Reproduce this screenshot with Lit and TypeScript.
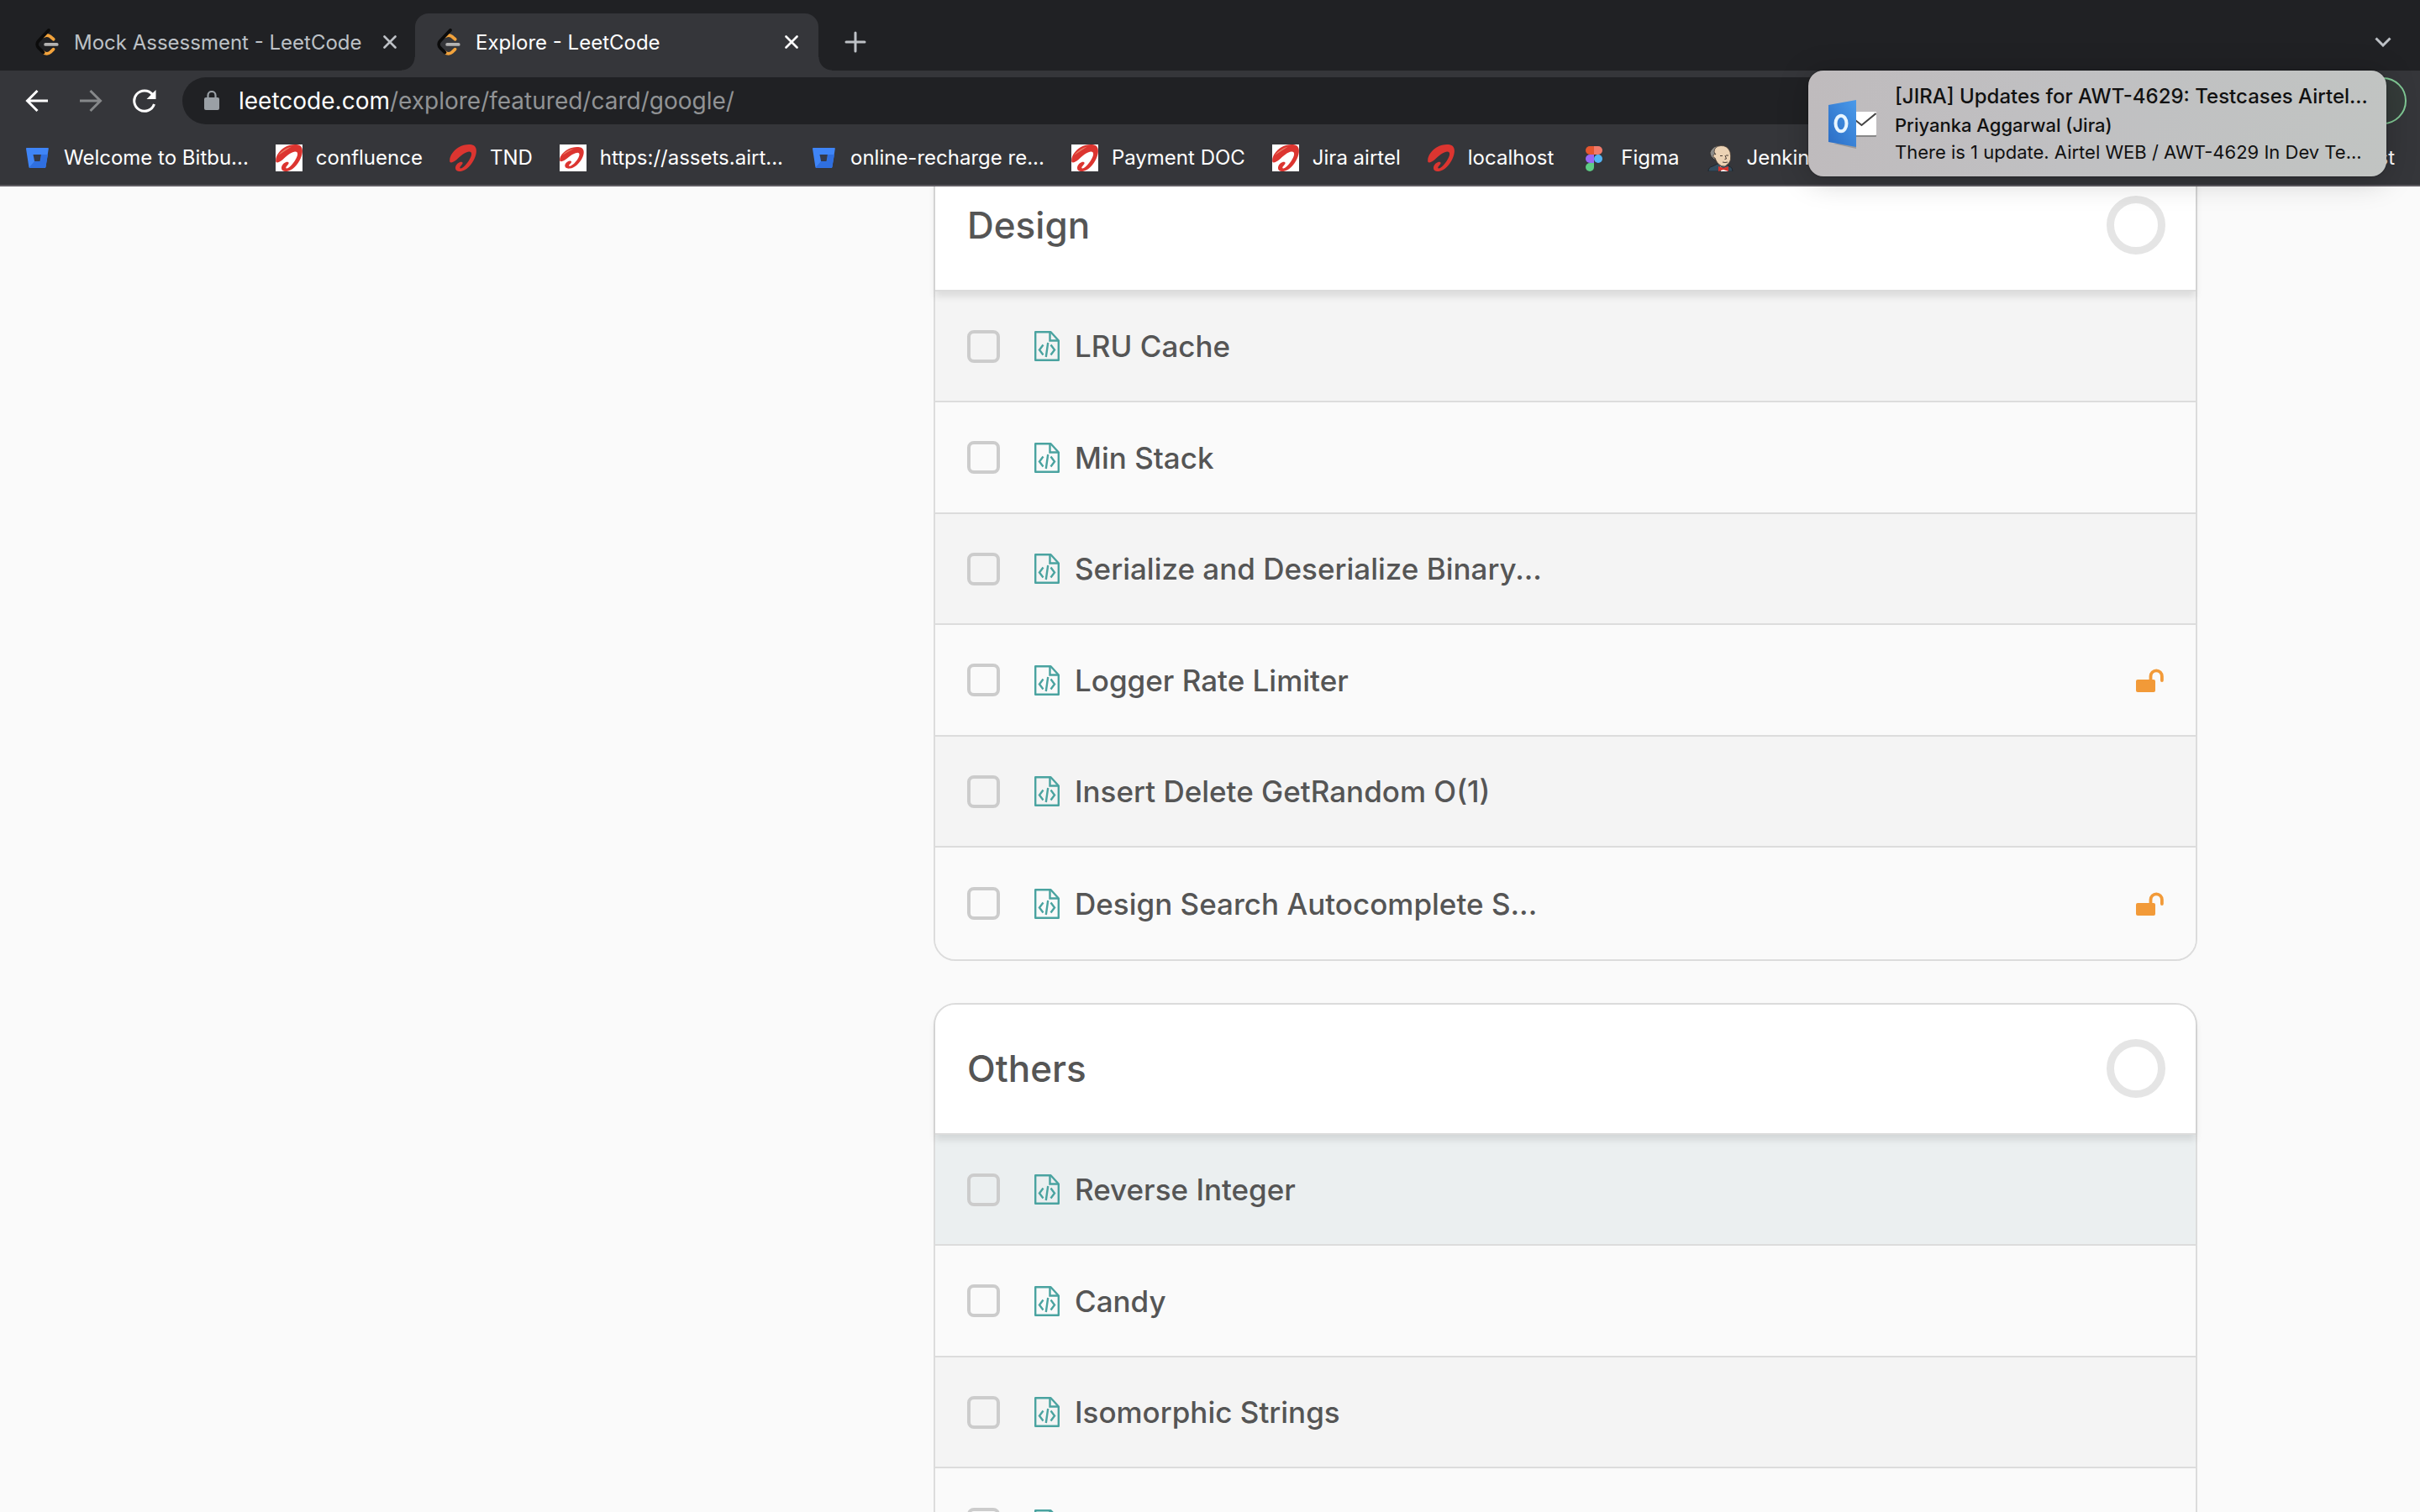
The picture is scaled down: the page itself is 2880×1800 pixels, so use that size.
import { LitElement, html, css, svg, nothing } from "lit";
import { customElement, property } from "lit/decorators.js";
import { classMap } from "lit/directives/class-map.js";

interface Problem {
  title: string;
  locked?: boolean;
  hovered?: boolean;
}

interface Bookmark {
  icon: string;
  label: string;
}

const DESIGN: Problem[] = [
  { title: "LRU Cache" },
  { title: "Min Stack" },
  { title: "Serialize and Deserialize Binary..." },
  { title: "Logger Rate Limiter", locked: true },
  { title: "Insert Delete GetRandom O(1)" },
  { title: "Design Search Autocomplete S...", locked: true },
];

const OTHERS: Problem[] = [
  { title: "Reverse Integer", hovered: true },
  { title: "Candy" },
  { title: "Isomorphic Strings" },
  { title: "Maximum Product Subarray" },
];

const BOOKMARKS: Bookmark[] = [
  { icon: "bitbucket", label: "Welcome to Bitbu..." },
  { icon: "airtel-box", label: "confluence" },
  { icon: "airtel", label: "TND" },
  { icon: "airtel-small", label: "https://assets.airt..." },
  { icon: "bitbucket", label: "online-recharge re..." },
  { icon: "airtel-box", label: "Payment DOC" },
  { icon: "airtel-box", label: "Jira airtel" },
  { icon: "airtel", label: "localhost" },
  { icon: "figma", label: "Figma" },
  { icon: "jenkins", label: "Jenkins" },
];

const swoosh = svg`
  <path d="M.3 20.500C-.6 14.500 4 7.500 11 3.300C17 -.2 25-.9 29 1.300C33 3.800 32.500 10.500 29.800 16.500C26.500 24 20 31 13.500 32C8.500 32.600 6 29.800 7.300 26C8.400 22.700 12 20.300 14.300 20.700C16.600 21.200 15.600 23.500 13.700 25.200C12 26.800 11.700 28.600 13.400 28.400C17 27.800 22.500 21 25 15.500C27 11 26.300 8.300 23 8.600C18 9.100 12.500 14.500 8.500 18C4.500 21.300 1 22.500 .3 20.500Z"/>`;

function bookmarkIcon(name: string) {
  switch (name) {
    case "bitbucket":
      return svg`
        <path fill="#3f85f7" d="M4 4h25q1 0 .8 1L26.400 27q-.2 1-1.200 1H7.600q-1 0-1.200-1L3 5q-.1-1 1-1Z"/>
        <path fill="#2f6fe0" d="M29 12H21L20 20h-7l-6 7q.2 1 1 1h17q1 0 1.300-1Z"/>
        <path fill="#343a4a" d="M11.500 12h9.400l-1.300 8h-6.500Z"/>`;
    case "airtel":
      return svg`<g fill="#dc3530">${swoosh}</g>`;
    case "airtel-box":
      return svg`
        <rect width="32" height="32" fill="#fff"/>
        <g fill="#dc3530">${swoosh}</g>
        <path d="M3 13Q9 5 19 2.500Q12 7 3 13Z" fill="#f0a080" opacity=".7"/>`;
    case "airtel-small":
      return svg`
        <rect width="32" height="32" fill="#fff"/>
        <g fill="#dc3530" transform="translate(0 3) scale(.9 .8)">${swoosh}</g>
        <path d="M3 13Q9 6 17 5Q11 8 3 13Z" fill="#f0a080" opacity=".7"/>`;
    case "figma":
      return svg`
        <path fill="#e5562f" d="M11 2h5v10h-5a5 5 0 0 1 0-10Z"/>
        <path fill="#f07a6a" d="M16 2h5a5 5 0 0 1 0 10h-5Z"/>
        <path fill="#9966f5" d="M11 12h5v10h-5a5 5 0 0 1 0-10Z"/>
        <circle fill="#53b4f5" cx="21" cy="17" r="5"/>
        <path fill="#5ecb84" d="M11 22h5v5a5 5 0 1 1-5-5Z"/>`;
    default:
      return svg`
        <path fill="#334c5e" stroke="#20262c" d="M2 32q0-5 5-6l6-3h9l5 3q4 1 4 6Z"/>
        <path fill="#8a8a88" stroke="#33302e" d="M8 17Q2 12 5 7T14 1l2 5-6 4v9Z"/>
        <path fill="#ecd3b5" stroke="#4a3d35" stroke-width=".8" d="M9 9Q9 2 17 1.500T28 9q1 5 .5 9T22 26q-5 1-9-4-2-3-3-6Q7 16 8 13t3-1Z"/>
        <path fill="none" stroke="#4a3d35" d="M16 13.500h3M23 13h3M22 13l1.500 4-2 .5M19 21q3 1 6 0"/>
        <path fill="#fff" d="M16 26l4 3 4-2 1 5H17Z"/>
        <path fill="#d8332c" d="M14 26l6 2 6-2v6l-6-2-6 2Z"/>`;
  }
}

const leetcodeIcon = html`
  <svg class="favicon" viewBox="0 0 24 24" aria-hidden="true" fill="none" stroke-width="2.800" stroke-linecap="round">
    <path stroke="#f2a33c" d="M9 7C10.800 5.700 13 5.800 14.700 7L17.800 9.600M8.800 21.200C10.600 22.800 13.200 22.700 15 21.100L17.700 18.500"/>
    <path stroke="#0b0b0b" d="M13.500 1.400L4.200 11.300C2.700 13 2.800 15.600 4.400 17.200L8.600 21.300"/>
    <path stroke="#b3b3b3" d="M10.600 14.200H20.800"/>
  </svg>`;

@customElement("chapter-card")
export class ChapterCard extends LitElement {
  @property() heading = "";
  @property({ attribute: false }) problems: Problem[] = [];

  static styles = css`
    :host {
      display: block;
      border: 2px solid #dcdcdc;
      border-radius: 26px;
      box-sizing: border-box;
    }
    .head {
      position: relative;
      display: flex;
      align-items: center;
      justify-content: space-between;
      padding: 41px 36px 42px 38px;
      background: #fff;
      border-bottom: 2px solid #dcdcdc;
      border-radius: 24px 24px 0 0;
      box-shadow: 0 6px 8px rgba(0, 0, 0, 0.1);
    }
    h2 {
      margin: 0;
      font-size: 44px;
      line-height: 56px;
      font-weight: 500;
      color: #555;
    }
    .ring {
      width: 70px;
      height: 70px;
      box-sizing: border-box;
      border: 9px solid #e5e5e5;
      border-radius: 50%;
    }
    ul {
      list-style: none;
      margin: 0;
      padding: 0;
      display: grid;
      grid-auto-rows: 132px 133px;
    }
    li {
      display: flex;
      align-items: center;
      gap: 41px;
      padding: 0 38px;
      background: #fafafa;
      border-bottom: 2px solid #dcdcdc;
    }
    li:nth-child(odd) {
      background: #f4f4f4;
    }
    li.hovered:nth-child(odd) {
      background: #ebeff0;
    }
    li:last-child {
      border-bottom: 0;
      border-radius: 0 0 24px 24px;
    }
    input {
      appearance: none;
      flex: none;
      box-sizing: border-box;
      width: 39px;
      height: 39px;
      margin: 0;
      border: 4px solid #ccc;
      border-radius: 8px;
    }
    input:checked {
      background: #4aa3a0;
    }
    label {
      flex: 1;
      display: flex;
      align-items: center;
      gap: 18px;
      font-size: 35px;
      line-height: 48px;
      font-weight: 500;
      color: #555;
      white-space: nowrap;
    }
    .code {
      flex: none;
      width: 30px;
      height: 36px;
    }
    .lock {
      flex: none;
      width: 33px;
      height: 28px;
    }
  `;

  render() {
    return html`
      <header class="head">
        <h2>${this.heading}</h2>
        <span class="ring" role="img" aria-label="0%"></span>
      </header>
      <ul>
        ${this.problems.map(
          (p, i) => html`
            <li class=${classMap({ hovered: !!p.hovered })}>
              <input type="checkbox" id="p${i}" />
              <label for="p${i}">
                <svg class="code" viewBox="0 0 30 36" fill="none" stroke="#4aa3a0" stroke-width="2.400" aria-hidden="true">
                  <path d="M1.200 1.200H19.500L28.800 11.500V34.800H1.200Z" stroke-linejoin="round" />
                  <path d="M18.500 1V11.500H29" />
                  <path d="M10.500 16.500L6 22.500L10.500 28.500M19.500 16.500L24 22.500L19.500 28.500M16.200 14L13.800 31" />
                </svg>
                <span>${p.title}</span>
              </label>
              ${p.locked
                ? html`<svg class="lock" viewBox="0 0 33 28" role="img" aria-label="Unlocked">
                    <rect y="13" width="23" height="15" rx="2" fill="#f29a38" />
                    <path d="M17.500 14V9a6.700 6.700 0 0 1 13.400 0v5" fill="none" stroke="#f29a38" stroke-width="3.800" stroke-linecap="round" />
                  </svg>`
                : nothing}
            </li>
          `
        )}
      </ul>
    `;
  }
}

@customElement("app-root")
export class AppRoot extends LitElement {
  static styles = css`
    :host {
      display: flex;
      flex-direction: column;
      height: 100vh;
      overflow: hidden;
      position: relative;
      background: #fafafa;
      font-family: Inter, "Liberation Sans", sans-serif;
    }
    button {
      border: 0;
      padding: 0;
      background: none;
      font: inherit;
      color: inherit;
      display: grid;
      place-items: center;
    }
    svg {
      display: block;
    }
    .tabs {
      display: flex;
      align-items: flex-end;
      height: 84px;
      background: #202124;
      color: #bdc1c6;
      font-size: 24px;
    }
    .tab {
      box-sizing: border-box;
      display: flex;
      align-items: center;
      height: 68px;
      padding: 0 18px 0 24px;
      width: 480px;
    }
    .tab:first-child {
      margin-left: 16px;
      padding-right: 16px;
      width: 478px;
    }
    .tab-title {
      flex: 1;
      display: flex;
      align-items: center;
      gap: 16px;
      text-align: left;
      white-space: nowrap;
    }
    .tab.active {
      position: relative;
      background: #35363a;
      color: #fff;
      border-radius: 16px 16px 0 0;
    }
    .tab.active::before,
    .tab.active::after {
      content: "";
      position: absolute;
      bottom: 0;
      width: 16px;
      height: 16px;
    }
    .tab.active::before {
      right: 100%;
      background: radial-gradient(circle at 0 0, transparent 15px, #35363a 16px);
    }
    .tab.active::after {
      left: 100%;
      background: radial-gradient(circle at 100% 0, transparent 15px, #35363a 16px);
    }
    .favicon {
      flex: none;
      width: 32px;
      height: 32px;
    }
    .close {
      width: 28px;
      height: 28px;
    }
    .icon-button {
      width: 56px;
      height: 56px;
    }
    .new-tab {
      margin: 0 auto 6px 16px;
    }
    .tab-search {
      margin: 0 16px 6px 0;
    }
    .toolbar {
      display: flex;
      align-items: center;
      gap: 8px;
      padding: 8px 16px;
      background: #35363a;
      color: #fff;
    }
    .dim {
      color: #86888a;
    }
    .address {
      flex: 1;
      display: flex;
      align-items: center;
      box-sizing: border-box;
      height: 56px;
      margin: 0 24px 0 9px;
      padding: 0 26px;
      border-radius: 28px;
      background: #202124;
      font-size: 28px;
      color: #fff;
    }
    .address svg {
      margin-right: 23px;
    }
    .address input {
      flex: 1;
      min-width: 0;
      padding: 0;
      border: 0;
      background: none;
      outline: none;
      font: inherit;
      color: #919395;
    }
    .profile {
      box-sizing: border-box;
      width: 128px;
      height: 56px;
      border: 2px solid #81c995;
      border-radius: 28px;
      background: #353c3a;
    }
    .bookmarks {
      box-sizing: border-box;
      display: flex;
      align-items: center;
      gap: 32px;
      height: 66px;
      padding: 0 30px 0 28px;
      background: #35363a;
      border-bottom: 2px solid #5f5c62;
      color: #fff;
      font-size: 24px;
      line-height: 32px;
    }
    .bookmarks a {
      display: flex;
      align-items: center;
      gap: 16px;
      color: inherit;
      text-decoration: none;
      white-space: nowrap;
    }
    .bookmarks svg {
      width: 32px;
      height: 32px;
    }
    .bookmarks .reading {
      margin-left: auto;
    }
    .viewport {
      flex: 1;
      min-height: 0;
      overflow: hidden;
    }
    .page {
      display: grid;
      grid-template-columns: 9fr 16fr;
      max-width: 2350px;
      margin: -32px auto 0;
    }
    .chapters {
      grid-column: 2;
      display: grid;
      gap: 50px;
    }
    .toast {
      position: absolute;
      top: 84px;
      right: 40px;
      box-sizing: border-box;
      width: 688px;
      height: 126px;
      display: flex;
      align-items: center;
      gap: 22px;
      padding: 0 20px 0 24px;
      border-radius: 18px;
      background: linear-gradient(100deg, #bfbbbd, #c0c0c2 45%, #c1c4c2);
      box-shadow: 0 4px 36px rgba(0, 0, 0, 0.22), 0 0 2px rgba(0, 0, 0, 0.5);
      color: #111;
    }
    .toast > svg {
      flex: none;
      width: 57px;
      height: 60px;
    }
    .toast-text {
      min-width: 0;
      white-space: nowrap;
      font-size: 22px;
      line-height: 32px;
    }
    .toast p {
      margin: 0;
    }
    .toast .subject {
      font-size: 24px;
      line-height: 36px;
      font-weight: 500;
    }
    .toast .sender {
      font-weight: 500;
    }
  `;

  private tab(title: string, active: boolean) {
    return html`
      <div class=${classMap({ tab: true, active })}>
        <button class="tab-title" role="tab" aria-selected=${active ? "true" : "false"}>${leetcodeIcon}<span>${title}</span></button>
        <button class="close" aria-label="Close tab">
          <svg width="16" height="16" viewBox="0 0 16 16" stroke="currentColor" stroke-width="2.600" stroke-linecap="round"><path d="M1.500 1.500L14.500 14.500M14.500 1.500L1.500 14.500" /></svg>
        </button>
      </div>
    `;
  }

  render() {
    return html`
      <div class="tabs">
        ${this.tab("Mock Assessment - LeetCode", false)}
        ${this.tab("Explore - LeetCode", true)}
        <button class="icon-button new-tab" aria-label="New tab">
          <svg width="26" height="26" viewBox="0 0 26 26" stroke="currentColor" stroke-width="3" stroke-linecap="round"><path d="M13 2V24M2 13H24" /></svg>
        </button>
        <button class="icon-button tab-search" aria-label="Search tabs">
          <svg width="20" height="12" viewBox="0 0 20 12" fill="none" stroke="currentColor" stroke-width="3"><path d="M1.500 1.500L10 10L18.500 1.500" /></svg>
        </button>
      </div>
      <div class="toolbar">
        <button class="icon-button" aria-label="Back">
          <svg width="28" height="28" viewBox="0 0 28 28" fill="none" stroke="currentColor" stroke-width="3"><path d="M27 14H3M14.500 2L2.500 14L14.500 26" /></svg>
        </button>
        <button class="icon-button dim" aria-label="Forward">
          <svg width="28" height="28" viewBox="0 0 28 28" fill="none" stroke="currentColor" stroke-width="3"><path d="M1 14H25M13.500 2L25.500 14L13.500 26" /></svg>
        </button>
        <button class="icon-button" aria-label="Reload">
          <svg width="28" height="28" viewBox="0 0 28 28" fill="none" stroke="currentColor" stroke-width="3"><path d="M25.500 18A12.200 12.200 0 1 1 23.500 6.500" /><path d="M27.500 1V12H16.500Z" fill="currentColor" stroke="none" /></svg>
        </button>
        <label class="address">
          <svg width="18" height="24" viewBox="0 0 18 24" role="img" aria-label="Secure"><rect y="8" width="18" height="15" rx="2" fill="#9aa0a6" /><path d="M4.500 9V5.500a4.500 4.500 0 0 1 9 0V9" fill="none" stroke="#9aa0a6" stroke-width="2.200" /></svg>
          <span>leetcode.com</span>
          <input type="text" aria-label="Address" .value=${"/explore/featured/card/google/"} />
        </label>
        <button class="profile" aria-label="Update"></button>
      </div>
      <nav class="bookmarks">
        ${BOOKMARKS.map(
          (b) => html`<a href="#"><svg viewBox="0 0 32 32" aria-hidden="true">${bookmarkIcon(b.icon)}</svg><span>${b.label}</span></a>`
        )}
        <a class="reading" href="#">Reading List</a>
      </nav>
      <main class="viewport">
        <div class="page">
          <div class="chapters">
            <chapter-card heading="Design" .problems=${DESIGN}></chapter-card>
            <chapter-card heading="Others" .problems=${OTHERS}></chapter-card>
          </div>
        </div>
      </main>
      <aside class="toast" role="status">
        <svg viewBox="0 0 57 60" aria-hidden="true">
          <defs>
            <linearGradient id="blue" x1="1" y1="0" x2="0" y2="1"><stop offset="0" stop-color="#4a9aea" /><stop offset="1" stop-color="#2a6cc4" /></linearGradient>
          </defs>
          <path fill="#777" opacity=".5" d="M6 54L33 60V54Z" />
          <rect x="28" y="17" width="29" height="29" rx="1" fill="#888" />
          <rect x="28" y="16" width="29" height="28" rx="1" fill="#fff" />
          <path d="M32 26L39.500 32L56.500 18" fill="none" stroke="#444" stroke-width="2" />
          <path fill="url(#blue)" d="M0 8L33 2V58L0 52Z" />
          <ellipse cx="15" cy="30" rx="6.500" ry="9.300" fill="none" stroke="#e8f5ff" stroke-width="4" />
        </svg>
        <div class="toast-text">
          <p class="subject">[JIRA] Updates for AWT-4629: Testcases Airtel...</p>
          <p class="sender">Priyanka Aggarwal (Jira)</p>
          <p>There is 1 update. Airtel WEB / AWT-4629 In Dev Te...</p>
        </div>
      </aside>
    `;
  }
}
